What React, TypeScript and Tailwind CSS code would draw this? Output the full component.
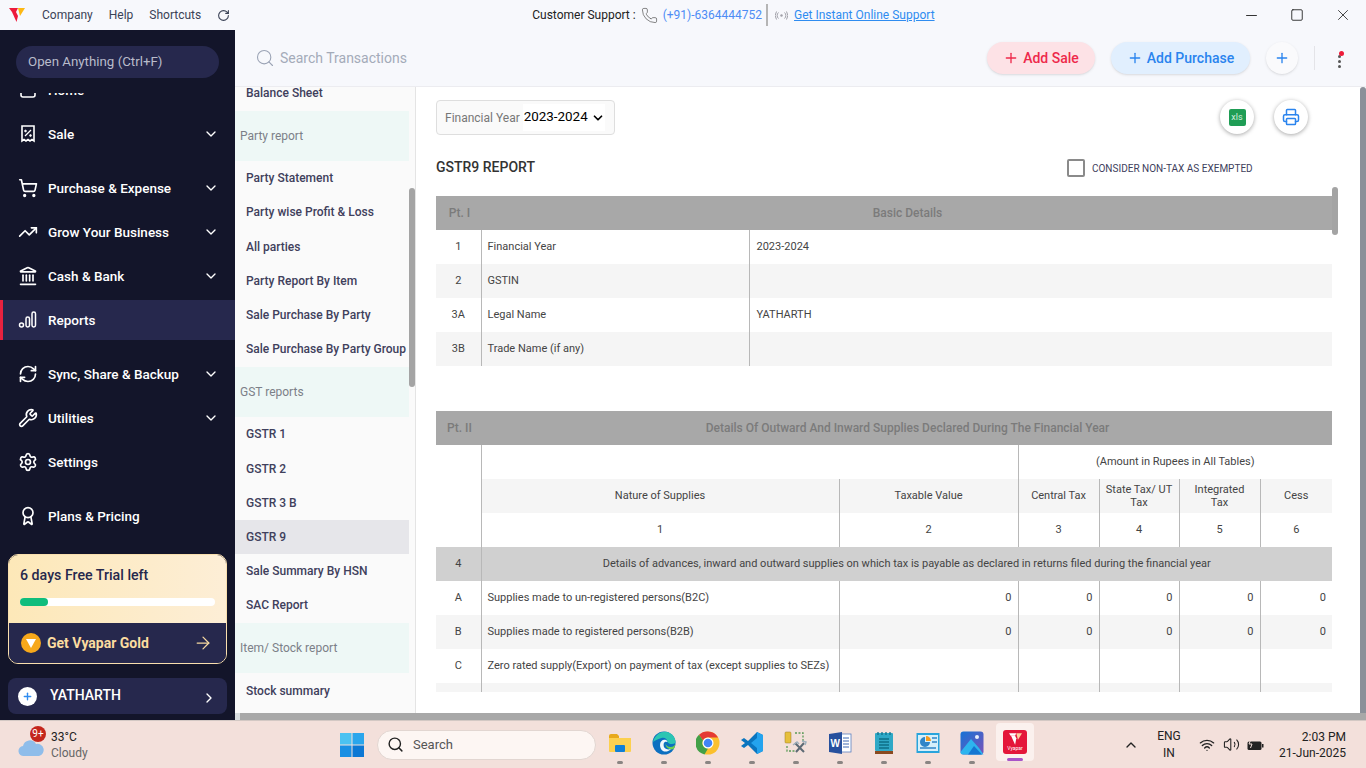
import React from 'react';
import {
  ArrowRight,
  Award,
  ChevronDown,
  ChevronRight,
  ChevronUp,
  Landmark,
  Minus,
  Phone,
  Plus,
  Printer,
  RefreshCw,
  RotateCw,
  Search,
  Settings,
  ShoppingCart,
  Square,
  TrendingUp,
  Volume2,
  Wifi,
  Wrench,
  X
} from 'lucide-react';

const VyaparMark: React.FC<{ size?: number }> = ({ size = 16 }) => (
  <svg width={size} height={size} viewBox="0 0 16 16">
    <path d="M0 1h9l-2 4H3z" fill="#ed1a3b" />
    <path d="M9 1h7l-5 8z" fill="#fdb813" />
    <path d="M3 5h4l2 4-1.500 6z" fill="#ed1a3b" />
  </svg>
);

const SaleIcon = () => (
  <svg width="20" height="20" viewBox="0 0 20 20" fill="none" stroke="white" strokeWidth="1.6">
    <path d="M4 2h12v15l-2-1.400-2 1.400-2-1.400-2 1.400-2-1.400-2 1.400z" />
    <path d="M7 12l6-6" strokeWidth="1.300" />
    <circle cx="7.500" cy="7" r="0.900" fill="white" strokeWidth="0.800" />
    <circle cx="12.500" cy="11.500" r="0.900" fill="white" strokeWidth="0.800" />
  </svg>
);

const ReportsIcon = () => (
  <svg width="20" height="20" viewBox="0 0 20 20" fill="none" stroke="white" strokeWidth="1.500">
    <circle cx="3.500" cy="15" r="2" />
    <rect x="8" y="7" width="3.500" height="10" rx="1.700" />
    <rect x="14" y="2" width="3.500" height="15" rx="1.700" />
  </svg>
);

const HomeClip = () => (
  <svg width="20" height="20" viewBox="0 0 20 20" fill="none" stroke="white" strokeWidth="1.600">
    <path d="M3 6v9a2 2 0 0 0 2 2h10a2 2 0 0 0 2-2V6" />
  </svg>
);

const navRows = [
  { label: 'Home', icon: <HomeClip />, chevron: true },
  { label: 'Sale', icon: <SaleIcon />, chevron: true },
  { label: 'Purchase & Expense', icon: <ShoppingCart size={20} color="white" />, chevron: true, gap: true },
  { label: 'Grow Your Business', icon: <TrendingUp size={20} color="white" />, chevron: true },
  { label: 'Cash & Bank', icon: <Landmark size={20} color="white" />, chevron: true },
  { label: 'Reports', icon: <ReportsIcon />, chevron: false, active: true },
  { label: 'Sync, Share & Backup', icon: <RefreshCw size={20} color="white" />, chevron: true, gap: true },
  { label: 'Utilities', icon: <Wrench size={20} color="white" />, chevron: true },
  { label: 'Settings', icon: <Settings size={20} color="white" />, chevron: false },
  { label: 'Plans & Pricing', icon: <Award size={20} color="white" />, chevron: false, gap: true }
];

const reportRows: { label: string; type?: 'section' | 'selected' }[] = [
  { label: 'Balance Sheet' },
  { label: 'Party report', type: 'section' },
  { label: 'Party Statement' },
  { label: 'Party wise Profit & Loss' },
  { label: 'All parties' },
  { label: 'Party Report By Item' },
  { label: 'Sale Purchase By Party' },
  { label: 'Sale Purchase By Party Group' },
  { label: 'GST reports', type: 'section' },
  { label: 'GSTR 1' },
  { label: 'GSTR 2' },
  { label: 'GSTR 3 B' },
  { label: 'GSTR 9', type: 'selected' },
  { label: 'Sale Summary By HSN' },
  { label: 'SAC Report' },
  { label: 'Item/ Stock report', type: 'section' },
  { label: 'Stock summary' }
];

const basicRows = [
  ['1', 'Financial Year', '2023-2024'],
  ['2', 'GSTIN', ''],
  ['3A', 'Legal Name', 'YATHARTH'],
  ['3B', 'Trade Name (if any)', '']
];

const supplyRows = [
  ['A', 'Supplies made to un-registered persons(B2C)', '0', '0', '0', '0', '0'],
  ['B', 'Supplies made to registered persons(B2B)', '0', '0', '0', '0', '0'],
  ['C', 'Zero rated supply(Export) on payment of tax (except supplies to SEZs)', '', '', '', '', ''],
  ['', '', '', '', '', '', '']
];

const line = 'border-l border-[#b8b8b8]';

const Sidebar = () => (
  <aside className="w-[235px] shrink-0 flex flex-col bg-[#13152a] overflow-hidden">
    <div className="px-4 pt-4 pb-[15px]">
      <div className="h-[32px] rounded-full bg-[#26284d] pl-3 flex items-center text-[13.300px] text-[#b9bccb]">
        Open Anything (Ctrl+F)
      </div>
    </div>
    <div className="h-[461px] overflow-hidden">
      <div className="mt-[-25px]">
        {navRows.map((row) => (
          <div key={row.label} className={`h-[44px] flex items-center ${row.gap ? 'mt-[10px]' : ''}`}>
            <div
              className={`w-full h-[40px] pr-[16px] flex items-center ${row.active ? 'bg-[#26284d] border-l-[3px] border-[#e8223f] pl-[15px]' : 'pl-[18px]'}`}
            >
              <div className="w-[20px] h-[20px] mr-[10px] flex items-center justify-center shrink-0">{row.icon}</div>
              <span className="text-[13.500px] font-medium text-white flex-1">{row.label}</span>
              {row.chevron && <ChevronDown size={16} color="white" />}
            </div>
          </div>
        ))}
      </div>
    </div>
    <div className="mx-2 h-[110px] rounded-[10px] overflow-hidden border border-[#f9dfae] flex flex-col">
      <div className="h-[68px] bg-gradient-to-r from-[#fde8b8] to-[#fdeed6] px-[11px] pt-[10px]">
        <div className="text-[14.200px] font-medium text-[#26284d]">6 days Free Trial left</div>
        <div className="mt-[12px] h-[8px] rounded-full bg-white">
          <div className="w-[28px] h-[8px] rounded-full bg-[#10bd7c]" />
        </div>
      </div>
      <div className="flex-1 bg-[#26284d] pl-[12px] pr-[13px] flex items-center">
        <div className="w-[20px] h-[20px] rounded-full bg-[#f7a81b] flex items-center justify-center">
          <svg width="10" height="10" viewBox="0 0 10 10">
            <path d="M0 1h10L5 10z" fill="white" />
          </svg>
        </div>
        <span className="ml-[6px] text-[14px] font-bold text-[#fbdca0] flex-1">Get Vyapar Gold</span>
        <ArrowRight size={20} strokeWidth={1.500} color="#f6d8a0" />
      </div>
    </div>
    <div className="mx-2 mt-[14px] h-[36px] rounded-[8px] bg-[#26284d] pl-[10px] pr-[10px] flex items-center">
      <div className="w-[19px] h-[19px] rounded-full bg-white flex items-center justify-center">
        <Plus size={11} color="#2f8cf0" strokeWidth={3} />
      </div>
      <span className="ml-[13px] text-[14px] font-medium text-white flex-1 mb-[2px]">YATHARTH</span>
      <ChevronRight size={16} color="white" className="mt-1" />
    </div>
  </aside>
);

const TitleBar = () => (
  <div className="h-[30px] shrink-0 bg-[#f7f8fc] flex items-center text-[12px] text-[#222a3f]">
    <div className="ml-[9px] w-[16px]">
      <VyaparMark />
    </div>
    <span className="ml-[17px] text-[#3a4256]">Company</span>
    <span className="ml-[16px] text-[#3a4256]">Help</span>
    <span className="ml-[16px] text-[#3a4256]">Shortcuts</span>
    <RotateCw size={13} className="ml-[16px] text-[#3a4256]" />
    <span className="ml-[302px] text-[#222]">Customer Support :</span>
    <Phone size={17} strokeWidth={1} className="ml-[5px] text-[#555]" />
    <span className="ml-[5px] text-[#4d8cf5]">(+91)-6364444752</span>
    <div className="ml-[4px] w-[2px] h-[22px] bg-[#b5b5b5]" />
    <svg width="13" height="9" viewBox="0 0 13 9" fill="none" stroke="#a0a0a8" strokeWidth="1" className="ml-[7px]">
      <circle cx="6.500" cy="4.500" r="1.200" fill="#a0a0a8" stroke="none" />
      <path d="M3.500 1.500a4 4 0 0 0 0 6M9.500 1.500a4 4 0 0 1 0 6M1.500.500a7 7 0 0 0 0 8M11.500.500a7 7 0 0 1 0 8" />
    </svg>
    <span className="ml-[6px] text-[#2f8cf0] underline">Get Instant Online Support</span>
    <div className="ml-auto flex items-center">
      <div className="w-[46px] flex justify-center">
        <Minus size={17} strokeWidth={1.300} className="text-[#222]" />
      </div>
      <div className="w-[46px] flex justify-center">
        <Square size={14} strokeWidth={1.500} className="text-[#222]" />
      </div>
      <div className="w-[46px] flex justify-center">
        <X size={18} strokeWidth={1.100} className="text-[#222]" />
      </div>
    </div>
  </div>
);

const ActionBar = () => (
  <div className="h-[57px] shrink-0 bg-[#f7f8fc] border-b border-[#ececf0] flex items-center pl-[20px]">
    <Search size={20} strokeWidth={1.300} className="text-[#9ba3b5]" />
    <span className="ml-[5px] mt-[1px] text-[14px] text-[#a4abb9]">Search Transactions</span>
    <button className="ml-auto h-[32px] w-[108px] rounded-full bg-[#fde2e6] shadow-sm text-[14px] font-medium text-[#ee2a4b] flex items-center justify-center gap-[4px]">
      <Plus size={16} strokeWidth={2} />
      Add Sale
    </button>
    <button className="ml-[16px] h-[32px] w-[139px] rounded-full bg-[#e1effe] shadow-sm text-[14px] font-medium text-[#2a84ee] flex items-center justify-center gap-[4px]">
      <Plus size={16} strokeWidth={2} />
      Add Purchase
    </button>
    <div className="ml-[16px] w-[32px] h-[32px] rounded-full bg-[#fafafc] shadow-sm flex items-center justify-center">
      <Plus size={16} color="#2a84ee" strokeWidth={2} />
    </div>
    <div className="ml-[16px] w-px h-[24px] bg-[#e4e4e8]" />
    <div className="relative ml-[23px] mr-[25px] flex flex-col gap-[2px] mt-[7px]">
      <span className="absolute top-[-4px] left-[1px] w-[5px] h-[5px] rounded-full bg-[#ee1c3a]" />
      <span className="w-[3px] h-[3px] rounded-full bg-[#555]" />
      <span className="w-[3px] h-[3px] rounded-full bg-[#555]" />
      <span className="w-[3px] h-[3px] rounded-full bg-[#555]" />
    </div>
  </div>
);

const ReportList = () => (
  <div className="relative w-[181px] shrink-0 bg-[#fafafa] border-r border-[#e4e4e4] overflow-hidden">
    <div className="mt-[-11px] w-[174px]">
      {reportRows.map((row) =>
        row.type === 'section' ? (
          <div
            key={row.label}
            className="h-[50px] mt-[1px] pl-[5px] flex items-center bg-[#eef8f6] text-[12px] text-[#7c8088]"
          >
            {row.label}
          </div>
        ) : (
          <div
            key={row.label}
            className={`h-[34.200px] pl-[11px] flex items-center text-[12px] font-medium text-[#40405c] whitespace-nowrap ${row.type === 'selected' ? 'bg-[#e6e6ea]' : ''}`}
          >
            {row.label}
          </div>
        )
      )}
    </div>
    <div className="absolute right-0 top-[101px] w-[6px] h-[199px] rounded-full bg-[#a4a4a4]" />
  </div>
);

const BasicTable = () => (
  <table className="table-fixed w-full border-collapse text-[11px] text-[#444]">
    <colgroup>
      <col className="w-[45px]" />
      <col className="w-[268px]" />
      <col />
    </colgroup>
    <tbody>
      <tr className="h-[34px] bg-[#a8a8a8] text-[12px] font-medium text-[#7b7b7b]">
        <td className="text-center pl-[2px]">Pt. I</td>
        <td colSpan={2} className="text-center pl-[2px]">Basic Details</td>
      </tr>
      {basicRows.map((row, i) => (
        <tr key={row[0]} className={`h-[34px] ${i % 2 === 1 ? 'bg-[#f5f5f5]' : 'bg-white'}`}>
          <td className="text-center">{row[0]}</td>
          <td className={`${line} pl-[6px]`}>{row[1]}</td>
          <td className={`${line} pl-[7px]`}>{row[2]}</td>
        </tr>
      ))}
    </tbody>
  </table>
);

const SuppliesTable = () => (
  <table className="table-fixed w-full border-collapse text-[11px] text-[#444]">
    <colgroup>
      <col className="w-[45px]" />
      <col className="w-[358px]" />
      <col className="w-[179px]" />
      <col className="w-[81px]" />
      <col className="w-[80px]" />
      <col className="w-[81px]" />
      <col />
    </colgroup>
    <tbody>
      <tr className="h-[34px] bg-[#a8a8a8] text-[12px] font-medium text-[#7b7b7b]">
        <td className="text-center pl-[2px]">Pt. II</td>
        <td colSpan={6} className="text-center pl-[2px]">Details Of Outward And Inward Supplies Declared During The Financial Year</td>
      </tr>
      <tr className="h-[34px]">
        <td rowSpan={3} />
        <td colSpan={2} className={line} />
        <td colSpan={4} className={`${line} text-center`}>(Amount in Rupees in All Tables)</td>
      </tr>
      <tr className="h-[34px] bg-[#f5f5f5] text-center leading-[13px]">
        <td className={`${line} pb-[2px]`}>Nature of Supplies</td>
        <td className={`${line} pb-[2px]`}>Taxable Value</td>
        <td className={`${line} pb-[2px]`}>Central Tax</td>
        <td className={`${line} px-[4px]`}>State Tax/ UT Tax</td>
        <td className={`${line} px-[12px]`}>Integrated Tax</td>
        <td className={`${line} pb-[2px]`}>Cess</td>
      </tr>
      <tr className="h-[34px] text-center">
        {['1', '2', '3', '4', '5', '6'].map((n) => (
          <td key={n} className={line}>{n}</td>
        ))}
      </tr>
      <tr className="h-[34px] bg-[#d0d0d0]">
        <td className="text-center">4</td>
        <td colSpan={6} className={`${line} text-center`}>
          Details of advances, inward and outward supplies on which tax is payable as declared in returns filed during the financial year
        </td>
      </tr>
      {supplyRows.map((row, i) => (
        <tr key={i} className={`h-[34px] ${i % 2 === 1 ? 'bg-[#f5f5f5]' : 'bg-white'}`}>
          <td className="text-center">{row[0]}</td>
          <td className={`${line} pl-[6px] whitespace-nowrap`}>{row[1]}</td>
          {row.slice(2).map((value, j) => (
            <td key={j} className={`${line} text-right pr-[6px]`}>{value}</td>
          ))}
        </tr>
      ))}
    </tbody>
  </table>
);

const ReportPane = () => (
  <div className="relative flex-1 bg-white overflow-hidden pl-[20px] pr-[34px] pt-[13px]">
    <div className="h-[35px] flex items-start">
      <div className="h-[35px] w-[179px] rounded-[4px] border border-[#dedede] bg-[#fafafa] flex items-center pl-[8px] text-[12px] text-[#777]">
        Financial Year
        <span className="ml-[3px] pl-[1px] h-[27px] bg-white flex items-center text-[13.400px] text-black gap-[3px]">
          2023-2024
          <ChevronDown size={14} strokeWidth={3} />
        </span>
      </div>
      <div className="ml-auto mr-[24px] flex gap-[20px]">
        <div className="w-[34px] h-[34px] rounded-full bg-white shadow-[0_1px_4px_rgba(0,0,0,0.35)] flex items-center justify-center">
          <div className="w-[17px] h-[17px] rounded-[2px] bg-[#1f9d55] text-[9px] leading-[17px] text-center text-[#cfeedd]">xls</div>
        </div>
        <div className="w-[34px] h-[34px] rounded-full bg-white shadow-[0_1px_4px_rgba(0,0,0,0.35)] flex items-center justify-center">
          <Printer size={18} color="#2a84ee" />
        </div>
      </div>
    </div>
    <div className="h-[61px] flex items-center pt-[4px]">
      <span className="text-[14px] font-medium text-[#333]">GSTR9 REPORT</span>
      <div className="ml-[532px] w-[18px] h-[18px] rounded-[2px] border-2 border-[#8a8a8a] bg-white" />
      <span className="ml-[7px] mt-[2px] text-[10px] text-[#40405c]">CONSIDER NON-TAX AS EXEMPTED</span>
    </div>
    <div className="h-[496px] overflow-hidden">
      <BasicTable />
      <div className="h-[45px]" />
      <SuppliesTable />
    </div>
    <div className="absolute left-[916px] top-[100px] w-[6px] h-[48px] rounded-full bg-[#a4a4a4]" />
    <div className="absolute right-0 top-0 w-[6px] h-full rounded-t-full bg-[#8a9099]" />
  </div>
);

const FolderIcon = () => (
  <svg width="24" height="24" viewBox="0 0 24 24">
    <path d="M1 5a2 2 0 0 1 2-2h6l2 2v3H1z" fill="#e8a91c" />
    <path d="M1 7h22v13a1 1 0 0 1-1 1H2a1 1 0 0 1-1-1z" fill="#fcd04f" />
    <rect x="7" y="14" width="10" height="7" rx="1" fill="#0f7fd6" />
  </svg>
);

const EdgeIcon = () => (
  <svg width="24" height="24" viewBox="0 0 24 24">
    <circle cx="12" cy="12" r="11.500" fill="#0c6fc0" />
    <path d="M1 11C3 3 10 0 15 1c5 1 9 6 8.500 11-3 2-7 1-8-1 0-3-3-5-6-4-4 1-7 3-8.500 4z" fill="#2cc5b3" />
    <path d="M23.500 12c0 2-2 4-5 4s-5-2-5-4c0 3 1 5 4 6 2 .700 3 .300 4 0 1-1 2-4 2-6z" fill="#6fd14f" />
    <path d="M8 14c0-4 3-6 6-5 1 .500 2 2 1 2-3-1-4 2-3 5 1 2 4 3 7 2-3 3-6 3-8 2-2-1-3-4-3-6z" fill="white" fillOpacity="0.950" />
  </svg>
);

const ChromeIcon = () => (
  <svg width="24" height="24" viewBox="0 0 24 24">
    <circle cx="12" cy="12" r="11.500" fill="#fbc02d" />
    <path d="M12 .500A11.500 11.500 0 0 1 22 6.500H12a5.500 5.500 0 0 0-5 3L3 3.800A11.500 11.500 0 0 1 12 .500z" fill="#e53935" />
    <path d="M3 3.800l4 5.700a5.500 5.500 0 0 0 5 8l-3.500 5.900A11.500 11.500 0 0 1 3 3.800z" fill="#43a047" />
    <circle cx="12" cy="12" r="5.500" fill="white" />
    <circle cx="12" cy="12" r="4.300" fill="#4285f4" />
  </svg>
);

const VsCodeIcon = () => (
  <svg width="24" height="24" viewBox="0 0 24 24">
    <path d="M17 1l6 3v16l-6 3-9-9-4 3-3-2 4-3-4-3 3-2 4 3z" fill="#0a75bf" />
    <path d="M17 1l6 3v16l-6 3zM17 7l-6 5 6 5z" fill="#24a3ee" fillRule="evenodd" />
  </svg>
);

const ToolsIcon = () => (
  <svg width="24" height="24" viewBox="0 0 24 24" fill="none">
    <rect x="1" y="1" width="6" height="11" rx="1" fill="#e6bf3c" stroke="#9b7f22" strokeWidth="0.500" />
    <path d="M11 2h8v8M3 15v5h8" stroke="#5b9a58" strokeWidth="1.300" strokeDasharray="2 1.500" />
    <path d="M12 21l8-9M11 12l9 9" stroke="#5d6a75" strokeWidth="2" />
    <path d="M9 14l4-3 2 2M18 10l4 1-1 3" stroke="#9fb0bd" strokeWidth="1.500" />
  </svg>
);

const WordIcon = () => (
  <svg width="24" height="24" viewBox="0 0 24 24">
    <rect x="9" y="3" width="14" height="18" fill="white" stroke="#5a7fc0" strokeWidth="0.800" />
    <path d="M15 7h6M15 10h6M15 13h6M15 16h6" stroke="#3f69b2" strokeWidth="1" />
    <path d="M1 3l13-2v22L1 21z" fill="#27509d" />
    <text x="2.500" y="16" fontSize="10" fontWeight="700" fontFamily="Liberation Sans" fill="white">W</text>
  </svg>
);

const NotepadIcon = () => (
  <svg width="24" height="24" viewBox="0 0 24 24">
    <rect x="3" y="2" width="18" height="18" rx="1" fill="#2fa8c6" />
    <path d="M6 1v3M10 1v3M14 1v3M18 1v3" stroke="#10708c" strokeWidth="1.300" />
    <path d="M7 8h10M7 11h10M7 14h10M7 17h10" stroke="#0e6f88" strokeWidth="1.300" />
    <rect x="3" y="20" width="18" height="3" fill="#8a4a20" />
  </svg>
);

const ControlIcon = () => (
  <svg width="24" height="24" viewBox="0 0 24 24">
    <rect x="0.500" y="2" width="23" height="20" fill="#28a4dc" />
    <rect x="2" y="4" width="20" height="16" fill="#d5effa" />
    <path d="M9 6a5 5 0 1 0 5 5H9z" fill="#2f85c8" />
    <path d="M10 5a5 5 0 0 1 5 5h-5z" fill="#f49b21" />
    <path d="M16 7h5M16 11h5M4 17h16" stroke="#2f85c8" strokeWidth="1.300" />
  </svg>
);

const PhotosIcon = () => (
  <svg width="24" height="24" viewBox="0 0 24 24">
    <defs>
      <linearGradient id="photo-bg" x1="0" y1="0" x2="1" y2="1">
        <stop offset="0" stopColor="#1573d6" />
        <stop offset="1" stopColor="#7a52b8" />
      </linearGradient>
    </defs>
    <rect x="0.500" y="0.500" width="23" height="23" rx="3" fill="url(#photo-bg)" />
    <circle cx="17" cy="6" r="2" fill="#e8f0fb" />
    <path d="M0.500 21L11 8l8 9 4.500 6.500H3a2.500 2.500 0 0 1-2.500-2.500z" fill="#2db4ee" />
    <path d="M8 23.500L14 15l8 8.500z" fill="#1476d2" />
  </svg>
);

const taskIcons = [
  <FolderIcon key="folder" />,
  <EdgeIcon key="edge" />,
  <ChromeIcon key="chrome" />,
  <VsCodeIcon key="code" />,
  <ToolsIcon key="tools" />,
  <WordIcon key="word" />,
  <NotepadIcon key="notes" />,
  <ControlIcon key="control" />,
  <PhotosIcon key="photos" />
];

const Taskbar = () => (
  <div className="h-[48px] shrink-0 bg-[#f3e0db] border-t border-[#d3c8c4] flex items-center text-[#222]">
    <div className="relative ml-[18px] w-[26px] h-[40px] flex items-center">
      <svg width="26" height="18" viewBox="0 0 26 18" className="mt-[6px]">
        <path d="M6 17a5 5 0 0 1-1-10 7 7 0 0 1 13-2 6 6 0 0 1 3 12z" fill="#8fbdea" />
      </svg>
      <span className="absolute left-[12px] top-[1px] w-[16px] h-[16px] rounded-full bg-[#c4261d] text-white text-[10px] leading-[16px] text-center">9+</span>
    </div>
    <div className="ml-[7px] w-[60px] text-[12px] leading-[16px]">
      <div className="text-[#222]">33°C</div>
      <div className="text-[#666]">Cloudy</div>
    </div>
    <svg width="24" height="24" viewBox="0 0 24 24" className="ml-[229px]">
      <rect x="0" y="0" width="11.500" height="11.500" fill="#4cc2f1" />
      <rect x="12.500" y="0" width="11.500" height="11.500" fill="#2aa6ec" />
      <rect x="0" y="12.500" width="11.500" height="11.500" fill="#1a8fe3" />
      <rect x="12.500" y="12.500" width="11.500" height="11.500" fill="#0c78d4" />
    </svg>
    <div className="ml-[13px] w-[219px] h-[30px] rounded-full bg-[#fdf6f3] border border-[#e2d6d1] flex items-center pl-[9px]">
      <Search size={17} strokeWidth={2} className="text-[#222]" />
      <span className="ml-[9px] text-[13px] text-[#555]">Search</span>
    </div>
    <div className="ml-[2px] flex">
      {taskIcons.map((icon, i) => (
        <div key={i} className="relative w-[44px] h-[44px] flex items-center justify-center mb-[4px]">
          {icon}
          <span className="absolute bottom-[1px] left-[19px] w-[6px] h-[3px] rounded-full bg-[#8a8583]" />
        </div>
      ))}
      <div className="relative ml-[2px] w-[38px] h-[38px] mt-[2px] rounded-[4px] bg-[#fbf1ee] flex items-center justify-center">
        <div className="w-[24px] h-[24px] rounded-[3px] bg-[#e4163a] flex flex-col items-center pt-[3px]">
          <svg width="13" height="12" viewBox="0 0 16 14">
            <path d="M0 0h9l-1.500 3H2z" fill="white" />
            <path d="M9 0h7l-5 8z" fill="#fcd0a0" />
            <path d="M2.500 3h5l1.500 3-1.500 8z" fill="white" />
          </svg>
          <span className="text-[5px] leading-[7px] text-white">Vyapar</span>
        </div>
        <span className="absolute bottom-0 left-[11px] w-[16px] h-[3px] rounded-full bg-[#a854c8]" />
      </div>
    </div>
    <ChevronUp size={16} className="ml-[89px] text-[#222]" />
    <div className="ml-[10px] w-[40px] text-center text-[12px] leading-[17px] text-[#222]">
      ENG
      <br />
      IN
    </div>
    <Wifi size={16} className="ml-[10px] text-[#222]" />
    <Volume2 size={17} strokeWidth={1.500} className="ml-[8px] text-[#222]" />
    <svg width="17" height="12" viewBox="0 0 17 12" className="ml-[7px]">
      <rect x="0.500" y="2.500" width="14" height="8.500" rx="1.500" fill="#222" />
      <rect x="15" y="5" width="1.500" height="3.500" fill="#222" />
      <path d="M4 0L2 5h3L3.500 9" stroke="#f3e0db" strokeWidth="1" fill="none" />
    </svg>
    <div className="ml-auto mr-[20px] text-right text-[12px] leading-[16px] text-[#222]">
      <div>2:03 PM</div>
      <div>21-Jun-2025</div>
    </div>
  </div>
);

export default function App() {
  return (
    <div className="w-[1366px] h-[768px] flex flex-col overflow-hidden font-['Roboto',sans-serif]">
      <TitleBar />
      <div className="h-[690px] flex">
        <Sidebar />
        <div className="flex-1 min-w-0 flex flex-col">
          <ActionBar />
          <div className="flex-1 min-h-0 flex">
            <ReportList />
            <ReportPane />
          </div>
          <div className="h-[7px] shrink-0 bg-[#a8a8a8] border-l-[5px] border-[#d8dde0]" />
        </div>
      </div>
      <Taskbar />
    </div>
  );
}
